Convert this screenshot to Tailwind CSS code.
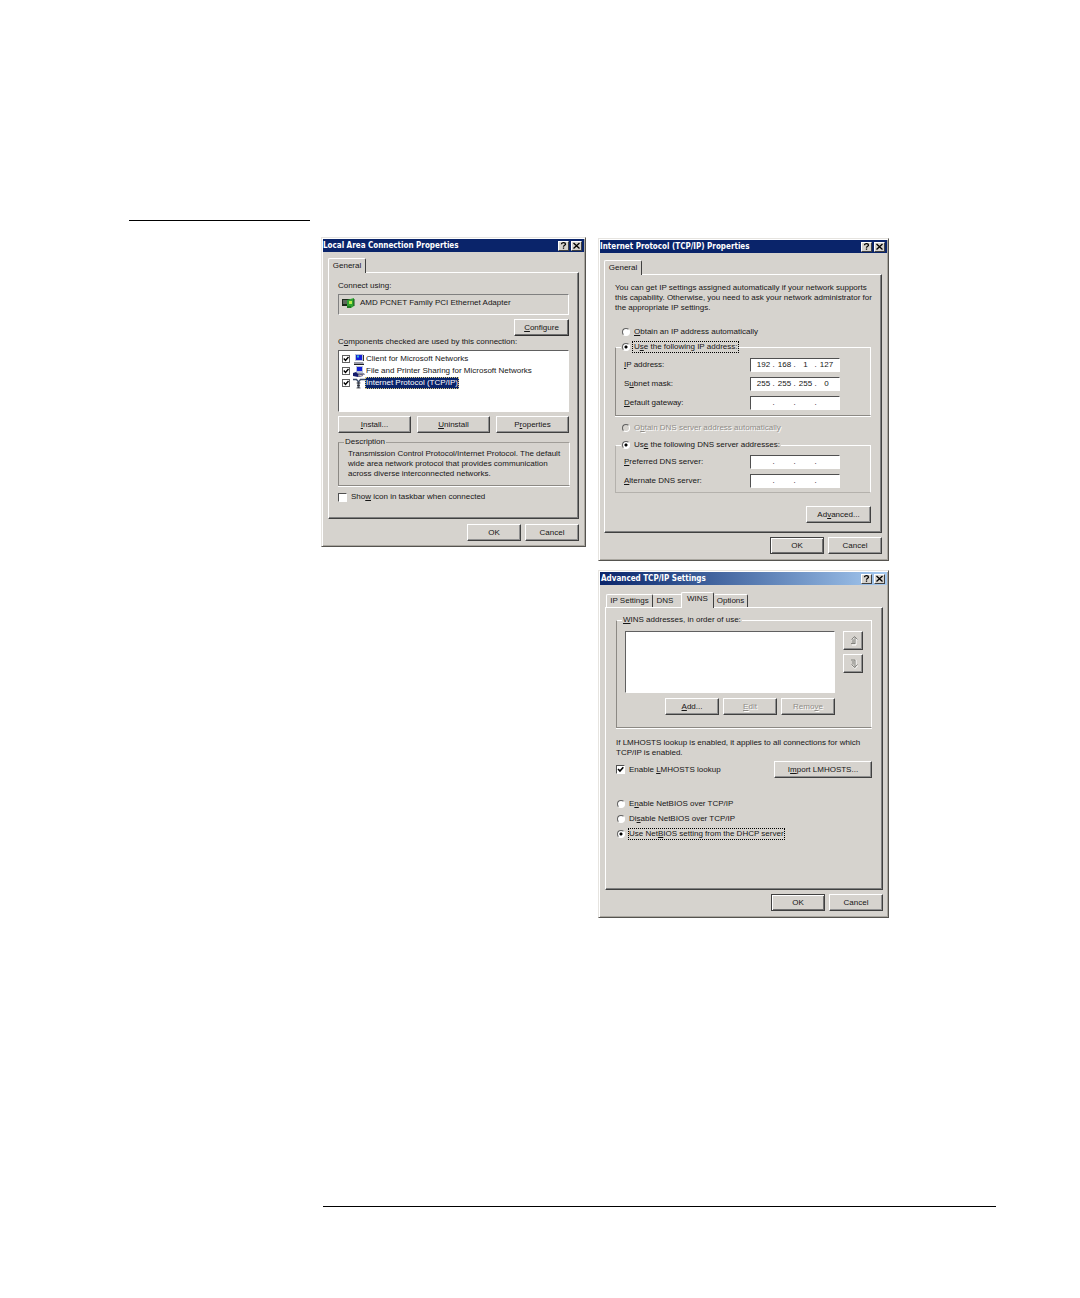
<!DOCTYPE html>
<html lang="en">
<head>
    <meta charset="UTF-8">
    <title>TCP/IP setup</title>
    <meta name="viewport" content="width=device-width, initial-scale=1.0">
    <script src="https://cdn.jsdelivr.net/npm/@tailwindcss/browser@4"></script>
</head>
<body class="min-h-screen bg-white text-[#161616] text-[8px] leading-[10px] whitespace-nowrap font-['Liberation_Sans',Arial,sans-serif]">
    <main class="flex items-start pt-[220px] pl-[129px]">
        <aside class="w-[181px] shrink-0 border-t border-black"></aside>

        <div class="flex items-start gap-3 pt-[17px] pl-[11px]">

            <!-- Local Area Connection -->
            <section class="w-[265px] border border-t-[#e6e4e0] border-l-[#e6e4e0] border-r-[#55534f] border-b-[#55534f] bg-[#d6d3ce] p-px shadow-[inset_1px_1px_0_#fff,inset_-1px_-1px_0_#aaa7a0]">
                <header class="flex h-[13px] items-center gap-[2px] bg-[#0a246a] pr-[2px]">
                    <h2 class="grow font-['DejaVu_Sans_Condensed','DejaVu_Sans',sans-serif] font-bold text-white">Local Area Connection Properties</h2>
                    <button type="button" aria-label="Help" class="grid h-[10px] w-[11px] place-items-center border border-t-white border-l-white border-r-[#404040] border-b-[#404040] bg-[#d6d3ce]">
                        <svg class="h-[7px] w-[7px]" viewBox="0 0 7 7" fill="none" stroke="#000" stroke-width="1.3"><path d="M1.5 2.2C1.5 .2 5.5 .2 5.5 2.2 5.5 3.3 3.5 3.3 3.5 4.8M3.5 5.5V6.8"/></svg>
                    </button>
                    <button type="button" aria-label="Close" class="grid h-[10px] w-[11px] place-items-center border border-t-white border-l-white border-r-[#404040] border-b-[#404040] bg-[#d6d3ce]">
                        <svg class="h-[7px] w-[7px]" viewBox="0 0 7 7" stroke="#000" stroke-width="1.3"><path d="M.5 1l6 5.5M6.5 1l-6 5.5"/></svg>
                    </button>
                </header>
                <div class="px-[5px] pt-[6px] pb-1">
                    <div role="tablist" class="flex">
                        <button type="button" role="tab" class="relative -mb-px h-[15px] w-[38px] rounded-t-[2px] border border-b-0 border-t-white border-l-white border-r-[#404040] bg-[#d6d3ce]">General</button>
                    </div>
                    <div class="border border-t-white border-l-white border-r-[#404040] border-b-[#404040] px-[9px] pt-2 pb-4 shadow-[inset_-1px_-1px_0_#808080]">
                        <p>Connect using:</p>
                        <div class="mt-[3px] flex h-[21px] items-center gap-[5px] border border-t-[#808080] border-l-[#808080] border-r-white border-b-white pb-[3px] pl-[3px]">
                            <svg class="h-3 w-[13px]" viewBox="0 0 13 12">
                                <path d="M0 2h8v7H0z" fill="#1c2a1c"/><path d="M1 4h4M1 6h4" stroke="#c8c8c8" stroke-width=".8"/>
                                <path d="M5 3l7-2v8l-3 2H5z" fill="#2fa332"/><path d="M7 4h3v3H7z" fill="#b8ea4e"/><path d="M6 9v2M8 9v2M12 2v7" stroke="#174d16"/>
                            </svg>
                            <span>AMD PCNET Family PCI Ethernet Adapter</span>
                        </div>
                        <div class="mt-1 flex justify-end">
                            <button type="button" class="h-[17px] w-[55px] border border-t-white border-l-white border-r-[#303030] border-b-[#303030] shadow-[inset_-1px_-1px_0_#707070]"><u>C</u>onfigure</button>
                        </div>
                        <p class="mt-px">C<u>o</u>mponents checked are used by this connection:</p>
                        <ul class="mt-[3px] h-[62px] border border-t-[#606060] border-l-[#606060] border-r-white border-b-white bg-white pt-[2px] pl-[3px]">
                            <li class="flex h-3 items-center">
                                <label class="flex items-center">
                                    <span class="relative h-[8px] w-[8px]">
                                        <input type="checkbox" checked class="block size-[8px] appearance-none border border-[#606060] bg-white">
                                        <svg class="pointer-events-none absolute inset-0 size-[8px]" viewBox="0 0 8 8" fill="none" stroke="#000" stroke-width="1.4"><path d="M1.8 3.6l1.7 1.8 3-3.4"/></svg>
                                    </span>
                                    <svg class="ml-[3px] h-[11px] w-3" viewBox="0 0 12 11">
                                        <path d="M2 0h8v7H2z" fill="#b9c1d8"/><path d="M3 1h6v5H3z" fill="#1420d8"/><path d="M4 1.5h2v2H4z" fill="#38b4d8"/><path d="M1 8h9l1 2H1z" fill="#9a9ca8"/><path d="M1 10.5h10" stroke="#222"/><path d="M10.500 1v6" stroke="#333"/>
                                    </svg>
                                    <span class="ml-px">Client for Microsoft Networks</span>
                                </label>
                            </li>
                            <li class="flex h-3 items-center">
                                <label class="flex items-center">
                                    <span class="relative h-[8px] w-[8px]">
                                        <input type="checkbox" checked class="block size-[8px] appearance-none border border-[#606060] bg-white">
                                        <svg class="pointer-events-none absolute inset-0 size-[8px]" viewBox="0 0 8 8" fill="none" stroke="#000" stroke-width="1.4"><path d="M1.8 3.6l1.7 1.8 3-3.4"/></svg>
                                    </span>
                                    <svg class="ml-[3px] h-[11px] w-3" viewBox="0 0 12 11">
                                        <path d="M3 0h7v7H3z" fill="#b9c1d8"/><path d="M4 1h5v4H4z" fill="#1420d8"/><path d="M2 7h9l1 2H2z" fill="#8e909c"/><path d="M0 7l3-1 3 3 4-1v2l-5 1-5-1z" fill="#141c6c"/><path d="M5 10l5-1" stroke="#d8c8b0"/>
                                    </svg>
                                    <span class="ml-px">File and Printer Sharing for Microsoft Networks</span>
                                </label>
                            </li>
                            <li class="flex h-3 items-center">
                                <label class="flex items-center">
                                    <span class="relative h-[8px] w-[8px]">
                                        <input type="checkbox" checked class="block size-[8px] appearance-none border border-[#606060] bg-white">
                                        <svg class="pointer-events-none absolute inset-0 size-[8px]" viewBox="0 0 8 8" fill="none" stroke="#000" stroke-width="1.4"><path d="M1.8 3.6l1.7 1.8 3-3.4"/></svg>
                                    </span>
                                    <svg class="ml-[3px] h-[11px] w-3" viewBox="0 0 12 11" fill="none">
                                        <path d="M0 1.500h3.500l2 2.500 2-2.500H12" stroke="#3c4c68" stroke-width="1.3"/><path d="M5.500 4v6" stroke="#4a5468" stroke-width="2.200"/><path d="M3.500 5h4M4 7.500h3M3.500 10h4" stroke="#222" stroke-width=".7"/>
                                    </svg>
                                    <span class="bg-[#0a246a] px-px py-px text-white outline-1 -outline-offset-1 outline-dotted outline-[#d8c878]">Internet Protocol (TCP/IP)</span>
                                </label>
                            </li>
                        </ul>
                        <div class="mt-1 grid grid-cols-3 gap-[6px]">
                            <button type="button" class="h-[17px] border border-t-white border-l-white border-r-[#404040] border-b-[#404040] shadow-[inset_-1px_-1px_0_#909090]"><u>I</u>nstall...</button>
                            <button type="button" class="h-[17px] border border-t-white border-l-white border-r-[#404040] border-b-[#404040] shadow-[inset_-1px_-1px_0_#909090]"><u>U</u>ninstall</button>
                            <button type="button" class="h-[17px] border border-t-white border-l-white border-r-[#404040] border-b-[#404040] shadow-[inset_-1px_-1px_0_#909090]">P<u>r</u>operties</button>
                        </div>
                        <fieldset class="mt-1 border border-t-[#a09d98] border-l-[#8c8984] border-r-white border-b-[#8c8984] px-[9px] pt-[2px] pb-[6px] shadow-[0_1px_0_#fff]">
                            <legend class="-ml-[4px] px-px">Description</legend>
                            <p>Transmission Control Protocol/Internet Protocol. The default<br>wide area network protocol that provides communication<br>across diverse interconnected networks.</p>
                        </fieldset>
                        <label class="mt-[6px] flex items-center gap-1">
                            <input type="checkbox" class="size-[9px] appearance-none border border-t-[#505050] border-l-[#505050] border-r-white border-b-white bg-white">
                            <span>Sho<u>w</u> icon in taskbar when connected</span>
                        </label>
                    </div>
                    <footer class="mt-[5px] flex justify-end gap-1">
                        <button type="button" class="h-[17px] w-[54px] border border-t-white border-l-white border-r-[#404040] border-b-[#404040] shadow-[inset_-1px_-1px_0_#909090]">OK</button>
                        <button type="button" class="h-[17px] w-[54px] border border-t-white border-l-white border-r-[#404040] border-b-[#404040] shadow-[inset_-1px_-1px_0_#909090]">Cancel</button>
                    </footer>
                </div>
            </section>

            <div class="flex w-[291px] flex-col gap-[9px] pt-px">

                <!-- TCP/IP properties -->
                <section class="border border-t-[#e6e4e0] border-l-[#e6e4e0] border-r-[#55534f] border-b-[#55534f] bg-[#d6d3ce] p-px shadow-[inset_1px_1px_0_#fff,inset_-1px_-1px_0_#aaa7a0]">
                    <header class="flex h-[13px] items-center gap-[2px] bg-[#0a246a] pr-[2px]">
                        <h2 class="grow font-['DejaVu_Sans_Condensed','DejaVu_Sans',sans-serif] font-bold text-white">Internet Protocol (TCP/IP) Properties</h2>
                        <button type="button" aria-label="Help" class="grid h-[10px] w-[11px] place-items-center border border-t-white border-l-white border-r-[#404040] border-b-[#404040] bg-[#d6d3ce]">
                            <svg class="h-[7px] w-[7px]" viewBox="0 0 7 7" fill="none" stroke="#000" stroke-width="1.3"><path d="M1.5 2.2C1.5 .2 5.5 .2 5.5 2.2 5.5 3.3 3.5 3.3 3.5 4.8M3.5 5.5V6.8"/></svg>
                        </button>
                        <button type="button" aria-label="Close" class="grid h-[10px] w-[11px] place-items-center border border-t-white border-l-white border-r-[#404040] border-b-[#404040] bg-[#d6d3ce]">
                            <svg class="h-[7px] w-[7px]" viewBox="0 0 7 7" stroke="#000" stroke-width="1.3"><path d="M.5 1l6 5.5M6.5 1l-6 5.5"/></svg>
                        </button>
                    </header>
                    <div class="pt-[7px] pr-[5px] pb-[5px] pl-1">
                        <div role="tablist" class="flex">
                            <button type="button" role="tab" class="relative -mb-px h-[15px] w-[38px] rounded-t-[2px] border border-b-0 border-t-white border-l-white border-r-[#404040] bg-[#d6d3ce]">General</button>
                        </div>
                        <div class="border border-t-white border-l-white border-r-[#404040] border-b-[#404040] px-[10px] pt-2 pb-[9px] shadow-[inset_-1px_-1px_0_#808080]">
                            <p>You can get IP settings assigned automatically if your network supports<br>this capability. Otherwise, you need to ask your network administrator for<br>the appropriate IP settings.</p>
                            <label class="mt-[14px] ml-[7px] flex items-center gap-1">
                                <input type="radio" name="ip" class="size-[8px] appearance-none rounded-full border border-t-[#606060] border-l-[#606060] border-r-white border-b-white bg-white">
                                <span><u>O</u>btain an IP address automatically</span>
                            </label>
                            <fieldset class="mt-[5px] border border-t-white border-l-[#8c8984] border-r-white border-b-[#8c8984] px-2 pt-[6px] pb-[5px] shadow-[0_1px_0_#fff]">
                                <legend class="-ml-[3px] px-px">
                                    <label class="flex items-center gap-[3px]">
                                        <input type="radio" name="ip" checked class="size-[8px] appearance-none rounded-full border border-t-[#606060] border-l-[#606060] border-r-white border-b-white bg-white checked:bg-[radial-gradient(circle,#000_1px,#fff_2px)]">
                                        <span class="px-px outline-1 outline-dotted outline-black">U<u>s</u>e the following IP address:</span>
                                    </label>
                                </legend>
                                <div class="flex flex-col gap-[5px]">
                                    <div class="flex items-center">
                                        <label for="ip1" class="w-[126px]"><u>I</u>P address:</label>
                                        <div class="flex h-[14px] w-[90px] items-center justify-center border border-t-[#505050] border-l-[#505050] border-r-white border-b-white bg-white">
                                            <input id="ip1" value="192" class="w-[18px] text-center"><span class="w-[3px]">.</span><input aria-label="IP address, part 2" value="168" class="w-[18px] text-center"><span class="w-[3px]">.</span><input aria-label="IP address, part 3" value="1" class="w-[18px] text-center"><span class="w-[3px]">.</span><input aria-label="IP address, part 4" value="127" class="w-[18px] text-center">
                                        </div>
                                    </div>
                                    <div class="flex items-center">
                                        <label for="mask1" class="w-[126px]">S<u>u</u>bnet mask:</label>
                                        <div class="flex h-[14px] w-[90px] items-center justify-center border border-t-[#505050] border-l-[#505050] border-r-white border-b-white bg-white">
                                            <input id="mask1" value="255" class="w-[18px] text-center"><span class="w-[3px]">.</span><input aria-label="Subnet mask, part 2" value="255" class="w-[18px] text-center"><span class="w-[3px]">.</span><input aria-label="Subnet mask, part 3" value="255" class="w-[18px] text-center"><span class="w-[3px]">.</span><input aria-label="Subnet mask, part 4" value="0" class="w-[18px] text-center">
                                        </div>
                                    </div>
                                    <div class="flex items-center">
                                        <label for="gw1" class="w-[126px]"><u>D</u>efault gateway:</label>
                                        <div class="flex h-[14px] w-[90px] items-center justify-center border border-t-[#505050] border-l-[#505050] border-r-white border-b-white bg-white">
                                            <input id="gw1" class="w-[18px] text-center"><span class="w-[3px]">.</span><input aria-label="Gateway, part 2" class="w-[18px] text-center"><span class="w-[3px]">.</span><input aria-label="Gateway, part 3" class="w-[18px] text-center"><span class="w-[3px]">.</span><input aria-label="Gateway, part 4" class="w-[18px] text-center">
                                        </div>
                                    </div>
                                </div>
                            </fieldset>
                            <label class="mt-[7px] ml-[7px] flex items-center gap-1 text-[#8f8c87] [text-shadow:1px_1px_0_#fff]">
                                <input type="radio" name="dns" disabled class="size-[8px] appearance-none rounded-full border border-t-[#606060] border-l-[#606060] border-r-white border-b-white bg-[#d6d3ce]">
                                <span>O<u>b</u>tain DNS server address automatically</span>
                            </label>
                            <fieldset class="mt-[7px] border border-t-white border-l-[#b4b1ac] border-r-white border-b-[#b4b1ac] px-2 pt-[5px] pb-1">
                                <legend class="-ml-[3px] px-px">
                                    <label class="flex items-center gap-1">
                                        <input type="radio" name="dns" checked class="size-[8px] appearance-none rounded-full border border-t-[#606060] border-l-[#606060] border-r-white border-b-white bg-white checked:bg-[radial-gradient(circle,#000_1px,#fff_2px)]">
                                        <span>Us<u>e</u> the following DNS server addresses:</span>
                                    </label>
                                </legend>
                                <div class="flex flex-col gap-[5px]">
                                    <div class="flex items-center">
                                        <label for="dns1" class="w-[126px]"><u>P</u>referred DNS server:</label>
                                        <div class="flex h-[14px] w-[90px] items-center justify-center border border-t-[#505050] border-l-[#505050] border-r-white border-b-white bg-white">
                                            <input id="dns1" class="w-[18px] text-center"><span class="w-[3px]">.</span><input aria-label="Preferred DNS, part 2" class="w-[18px] text-center"><span class="w-[3px]">.</span><input aria-label="Preferred DNS, part 3" class="w-[18px] text-center"><span class="w-[3px]">.</span><input aria-label="Preferred DNS, part 4" class="w-[18px] text-center">
                                        </div>
                                    </div>
                                    <div class="flex items-center">
                                        <label for="dns2" class="w-[126px]"><u>A</u>lternate DNS server:</label>
                                        <div class="flex h-[14px] w-[90px] items-center justify-center border border-t-[#505050] border-l-[#505050] border-r-white border-b-white bg-white">
                                            <input id="dns2" class="w-[18px] text-center"><span class="w-[3px]">.</span><input aria-label="Alternate DNS, part 2" class="w-[18px] text-center"><span class="w-[3px]">.</span><input aria-label="Alternate DNS, part 3" class="w-[18px] text-center"><span class="w-[3px]">.</span><input aria-label="Alternate DNS, part 4" class="w-[18px] text-center">
                                        </div>
                                    </div>
                                </div>
                            </fieldset>
                            <div class="mt-[13px] flex justify-end">
                                <button type="button" class="h-[17px] w-[65px] border border-t-white border-l-white border-r-[#404040] border-b-[#404040] shadow-[inset_-1px_-1px_0_#909090]">Ad<u>v</u>anced...</button>
                            </div>
                        </div>
                        <footer class="mt-1 flex justify-end gap-1">
                            <button type="button" class="h-[17px] w-[54px] border border-[#404040] shadow-[inset_1px_1px_0_#fff,inset_-1px_-1px_0_#707070]">OK</button>
                            <button type="button" class="h-[17px] w-[54px] border border-t-white border-l-white border-r-[#404040] border-b-[#404040] shadow-[inset_-1px_-1px_0_#909090]">Cancel</button>
                        </footer>
                    </div>
                </section>

                <!-- Advanced settings, WINS tab -->
                <section class="border border-t-[#e6e4e0] border-l-[#e6e4e0] border-r-[#55534f] border-b-[#55534f] bg-[#d6d3ce] p-px shadow-[inset_1px_1px_0_#fff,inset_-1px_-1px_0_#aaa7a0]">
                    <header class="flex h-[13px] items-center gap-[2px] bg-linear-to-r from-[#0a246a] to-[#a6caf0] pr-[2px] pl-px">
                        <h2 class="grow font-['DejaVu_Sans_Condensed','DejaVu_Sans',sans-serif] font-bold text-white">Advanced TCP/IP Settings</h2>
                        <button type="button" aria-label="Help" class="grid h-[10px] w-[11px] place-items-center border border-t-white border-l-white border-r-[#404040] border-b-[#404040] bg-[#d6d3ce]">
                            <svg class="h-[7px] w-[7px]" viewBox="0 0 7 7" fill="none" stroke="#000" stroke-width="1.3"><path d="M1.5 2.2C1.5 .2 5.5 .2 5.5 2.2 5.5 3.3 3.5 3.3 3.5 4.8M3.5 5.5V6.8"/></svg>
                        </button>
                        <button type="button" aria-label="Close" class="grid h-[10px] w-[11px] place-items-center border border-t-white border-l-white border-r-[#404040] border-b-[#404040] bg-[#d6d3ce]">
                            <svg class="h-[7px] w-[7px]" viewBox="0 0 7 7" stroke="#000" stroke-width="1.3"><path d="M.5 1l6 5.5M6.5 1l-6 5.5"/></svg>
                        </button>
                    </header>
                    <div class="pt-[7px] pr-1 pb-[5px] pl-[5px]">
                        <div role="tablist" class="flex items-end pl-px">
                            <button type="button" role="tab" class="h-[13px] w-[47px] rounded-t-[2px] border border-b-0 border-t-white border-l-white border-r-[#404040]">IP Settings</button>
                            <button type="button" role="tab" class="h-[13px] w-[28px] border-t border-t-white pr-1">DNS</button>
                            <button type="button" role="tab" aria-selected="true" class="relative -mb-px h-4 w-[33px] rounded-t-[2px] border border-b-0 border-t-white border-l-white border-r-[#404040] bg-[#d6d3ce] pb-1">WINS</button>
                            <button type="button" role="tab" class="h-[13px] w-[34px] rounded-t-[2px] border border-b-0 border-l-0 border-t-white border-r-[#404040]">Options</button>
                        </div>
                        <div class="border border-t-white border-l-white border-r-[#404040] border-b-[#404040] px-[10px] pt-[7px] pb-[50px] shadow-[inset_-1px_-1px_0_#808080]">
                            <fieldset class="flex items-start justify-between border border-t-white border-l-[#8c8984] border-r-white border-b-[#8c8984] pt-[6px] pr-2 pb-3 pl-2 shadow-[0_1px_0_#fff]">
                                <legend class="-ml-[3px] px-px"><u>W</u>INS addresses, in order of use:</legend>
                                <div class="w-[210px]">
                                    <select multiple aria-label="WINS addresses" class="block h-[62px] w-full border border-t-[#606060] border-l-[#606060] border-r-white border-b-white bg-white"></select>
                                    <div class="mt-[5px] flex justify-end gap-1">
                                        <button type="button" class="h-[17px] w-[54px] border border-t-white border-l-white border-r-[#404040] border-b-[#404040] shadow-[inset_-1px_-1px_0_#909090]"><u>A</u>dd...</button>
                                        <button type="button" disabled class="h-[17px] w-[54px] border border-t-white border-l-white border-r-[#404040] border-b-[#404040] text-[#8f8c87] shadow-[inset_-1px_-1px_0_#909090] [text-shadow:1px_1px_0_#fff]"><u>E</u>dit</button>
                                        <button type="button" disabled class="h-[17px] w-[54px] border border-t-white border-l-white border-r-[#404040] border-b-[#404040] text-[#8f8c87] shadow-[inset_-1px_-1px_0_#909090] [text-shadow:1px_1px_0_#fff]">Remo<u>v</u>e</button>
                                    </div>
                                </div>
                                <div class="flex flex-col gap-1">
                                    <button type="button" disabled aria-label="Move up" class="grid h-[19px] w-5 place-items-center border border-t-white border-l-white border-r-[#404040] border-b-[#404040] shadow-[inset_-1px_-1px_0_#909090]">
                                        <svg class="h-[11px] w-[9px]" viewBox="0 0 9 11" fill="none"><path d="M7 4v6H3M3 5.500l3-3 3 3" stroke="#fff"/><path d="M6 9V2M2.500 4.500l3-3 3 3M4 4v4M2 8.500h4" stroke="#7c7a76" stroke-width=".9"/></svg>
                                    </button>
                                    <button type="button" disabled aria-label="Move down" class="grid h-[19px] w-5 place-items-center border border-t-white border-l-white border-r-[#404040] border-b-[#404040] shadow-[inset_-1px_-1px_0_#909090]">
                                        <svg class="h-[11px] w-[9px]" viewBox="0 0 9 11" fill="none"><path d="M7 2v6M3 7.500l3 3 3-3" stroke="#fff"/><path d="M6 2v7.500M2.500 6.500l3 3 3-3M2 2h4M4 3v3.500" stroke="#7c7a76" stroke-width=".9"/></svg>
                                    </button>
                                </div>
                            </fieldset>
                            <p class="mt-[10px]">If LMHOSTS lookup is enabled, it applies to all connections for which<br>TCP/IP is enabled.</p>
                            <div class="mt-[3px] flex items-center justify-between">
                                <label class="flex items-center gap-1">
                                    <span class="relative h-[9px] w-[9px]">
                                        <input type="checkbox" checked class="block size-[9px] appearance-none border border-t-[#505050] border-l-[#505050] border-r-white border-b-white bg-white">
                                        <svg class="pointer-events-none absolute inset-0 size-[9px]" viewBox="0 0 8 8" fill="none" stroke="#000" stroke-width="1.4"><path d="M1.8 3.6l1.7 1.8 3-3.4"/></svg>
                                    </span>
                                    <span>Enable <u>L</u>MHOSTS lookup</span>
                                </label>
                                <button type="button" class="h-[17px] w-[98px] border border-t-white border-l-white border-r-[#404040] border-b-[#404040] shadow-[inset_-1px_-1px_0_#909090]">I<u>m</u>port LMHOSTS...</button>
                            </div>
                            <div class="mt-[21px] flex flex-col items-start gap-[5px] pl-px">
                                <label class="flex items-center gap-1">
                                    <input type="radio" name="netbios" class="size-[8px] appearance-none rounded-full border border-t-[#606060] border-l-[#606060] border-r-white border-b-white bg-white">
                                    <span>E<u>n</u>able NetBIOS over TCP/IP</span>
                                </label>
                                <label class="flex items-center gap-1">
                                    <input type="radio" name="netbios" class="size-[8px] appearance-none rounded-full border border-t-[#606060] border-l-[#606060] border-r-white border-b-white bg-white">
                                    <span>Di<u>s</u>able NetBIOS over TCP/IP</span>
                                </label>
                                <label class="flex items-center gap-1">
                                    <input type="radio" name="netbios" checked class="size-[8px] appearance-none rounded-full border border-t-[#606060] border-l-[#606060] border-r-white border-b-white bg-white checked:bg-[radial-gradient(circle,#000_1px,#fff_2px)]">
                                    <span class="outline-1 outline-dotted outline-black">Use Net<u>B</u>IOS setting from the DHCP server</span>
                                </label>
                            </div>
                        </div>
                        <footer class="mt-1 flex justify-end gap-1">
                            <button type="button" class="h-[17px] w-[54px] border border-[#404040] shadow-[inset_1px_1px_0_#fff,inset_-1px_-1px_0_#707070]">OK</button>
                            <button type="button" class="h-[17px] w-[54px] border border-t-white border-l-white border-r-[#404040] border-b-[#404040] shadow-[inset_-1px_-1px_0_#909090]">Cancel</button>
                        </footer>
                    </div>
                </section>
            </div>
        </div>
    </main>

    <hr class="mt-72 mr-[84px] ml-[323px] border-black">
</body>
</html>
